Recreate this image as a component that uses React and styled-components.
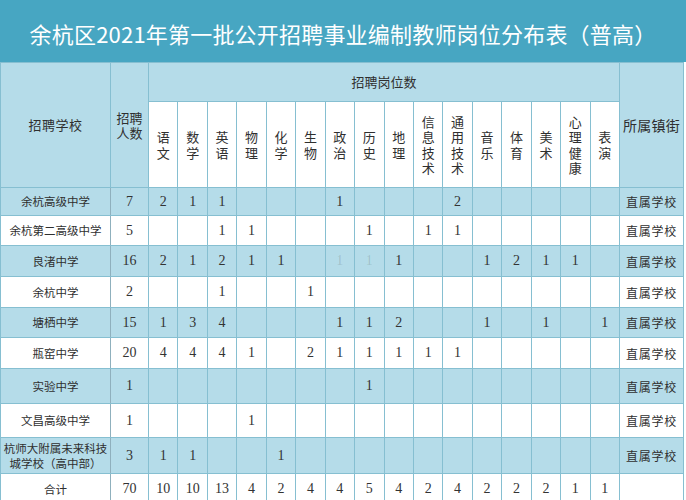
import React from 'react';
import styled, { createGlobalStyle } from 'styled-components';

const Global = createGlobalStyle`
  html, body { margin: 0; padding: 0; background: #fff; }
  body { font-family: "Noto Sans CJK SC", "Noto Sans", sans-serif; }
`;

const Page = styled.div`
  width: 686px;
  height: 500px;
  overflow: hidden;
  background: #fff;
`;

const TitleBar = styled.div`
  height: 62px;
  box-sizing: border-box;
  padding-top: 3px;
  background: #47a6c2;
  display: flex;
  align-items: center;
  justify-content: center;
  color: #fff;
  font-size: 22px;
  letter-spacing: 0.2px;
  font-family: "Noto Sans CJK SC", sans-serif;
`;

const Table = styled.table`
  width: 683px;
  border-collapse: collapse;
  table-layout: fixed;
  color: #333;
`;

const HeadCell = styled.th`
  border: 1px solid #86bfd1;
  background: #b5dce9;
  font-weight: 400;
  font-size: ${p => p.$size || 13}px;
  letter-spacing: ${p => p.$ls || 0}px;
  line-height: 16px;
  padding: 0;
  text-align: center;
  vertical-align: middle;
  color: #2f2f2f;
`;

const Wrap2 = styled.span`
  display: block;
  width: 27px;
  margin: 0 auto;
  line-height: 15.5px;
  word-break: break-all;
`;

const SubjectCell = styled.th`
  border: 1px solid #86bfd1;
  background: #fff;
  font-weight: 400;
  font-size: 13px;
  padding: 0;
  vertical-align: middle;
`;

const Stack = styled.span`
  display: block;
  width: 14px;
  margin: 0 auto;
  line-height: 15.5px;
  word-break: break-all;
  color: #2f2f2f;
`;

const Row = styled.tr`
  height: ${p => p.$h}px;
  background: ${p => (p.$blue ? '#b5dce9' : '#fff')};
`;

const NameCell = styled.td`
  border: 1px solid #86bfd1;
  border-right-color: #8fb0bd;
  padding: 0 2px;
  text-align: center;
  font-size: 11.5px;
  line-height: 15px;
  color: #2f2f2f;
`;

const NumCell = styled.td`
  border: 1px solid #86bfd1;
  padding: 0;
  text-align: center;
  font-family: "Liberation Serif", "Times New Roman", serif;
  font-size: 14px;
  color: ${p => (p.$faint ? 'rgba(60,60,60,0.18)' : '#333')};
`;

const TownCell = styled.td`
  border: 1px solid #86bfd1;
  padding: 0;
  text-align: center;
  font-size: 12px;
  letter-spacing: 0.8px;
  color: #2f2f2f;
`;

const subjects = ['语文', '数学', '英语', '物理', '化学', '生物', '政治', '历史', '地理', '信息技术', '通用技术', '音乐', '体育', '美术', '心理健康', '表演'];

const rows = [
  { name: '余杭高级中学', n: 7, v: [2, 1, 1, 0, 0, 0, 1, 0, 0, 0, 2, 0, 0, 0, 0, 0], h: 28, town: '直属学校' },
  { name: '余杭第二高级中学', n: 5, v: [0, 0, 1, 1, 0, 0, 0, 1, 0, 1, 1, 0, 0, 0, 0, 0], h: 30, town: '直属学校' },
  { name: '良渚中学', n: 16, v: [2, 1, 2, 1, 1, 0, 'f', 'f', 1, 0, 0, 1, 2, 1, 1, 0], h: 31, town: '直属学校' },
  { name: '余杭中学', n: 2, v: [0, 0, 1, 0, 0, 1, 0, 0, 0, 0, 0, 0, 0, 0, 0, 0], h: 31, town: '直属学校' },
  { name: '塘栖中学', n: 15, v: [1, 3, 4, 0, 0, 0, 1, 1, 2, 0, 0, 1, 0, 1, 0, 1], h: 30, town: '直属学校' },
  { name: '瓶窑中学', n: 20, v: [4, 4, 4, 1, 0, 2, 1, 1, 1, 1, 1, 0, 0, 0, 0, 0], h: 31, town: '直属学校' },
  { name: '实验中学', n: 1, v: [0, 0, 0, 0, 0, 0, 0, 1, 0, 0, 0, 0, 0, 0, 0, 0], h: 35, town: '直属学校' },
  { name: '文昌高级中学', n: 1, v: [0, 0, 0, 1, 0, 0, 0, 0, 0, 0, 0, 0, 0, 0, 0, 0], h: 34, town: '直属学校' },
  { name: '杭师大附属未来科技城学校（高中部）', n: 3, v: [1, 1, 0, 0, 1, 0, 0, 0, 0, 0, 0, 0, 0, 0, 0, 0], h: 36, town: '直属学校' },
  { name: '合计', n: 70, v: [10, 10, 13, 4, 2, 4, 4, 5, 4, 2, 4, 2, 2, 2, 1, 1], h: 31, town: '' },
];

export default function App() {
  return (
    <Page>
      <Global />
      <TitleBar>余杭区2021年第一批公开招聘事业编制教师岗位分布表（普高）</TitleBar>
      <Table>
        <colgroup>
          <col style={{ width: 110 }} />
          <col style={{ width: 38 }} />
          {subjects.map(s => (
            <col key={s} style={{ width: 29.44 }} />
          ))}
          <col style={{ width: 64 }} />
        </colgroup>
        <thead>
          <tr style={{ height: 39 }}>
            <HeadCell rowSpan={2} $size={13} $ls={0.5}>招聘学校</HeadCell>
            <HeadCell rowSpan={2} $size={13}>
              <Wrap2>招聘人数</Wrap2>
            </HeadCell>
            <HeadCell colSpan={16} $size={13}>招聘岗位数</HeadCell>
            <HeadCell rowSpan={2} $size={14} $ls={0.3}>所属镇街</HeadCell>
          </tr>
          <tr style={{ height: 86 }}>
            {subjects.map(s => (
              <SubjectCell key={s}>
                <Stack>{s}</Stack>
              </SubjectCell>
            ))}
          </tr>
        </thead>
        <tbody>
          {rows.map((r, i) => (
            <Row key={r.name} $h={r.h} $blue={i % 2 === 0}>
              <NameCell>{r.name}</NameCell>
              <NumCell>{r.n}</NumCell>
              {r.v.map((x, j) => (
                <NumCell key={j} $faint={x === 'f'}>
                  {x === 'f' ? 1 : x || ''}
                </NumCell>
              ))}
              <TownCell>{r.town}</TownCell>
            </Row>
          ))}
        </tbody>
      </Table>
    </Page>
  );
}
